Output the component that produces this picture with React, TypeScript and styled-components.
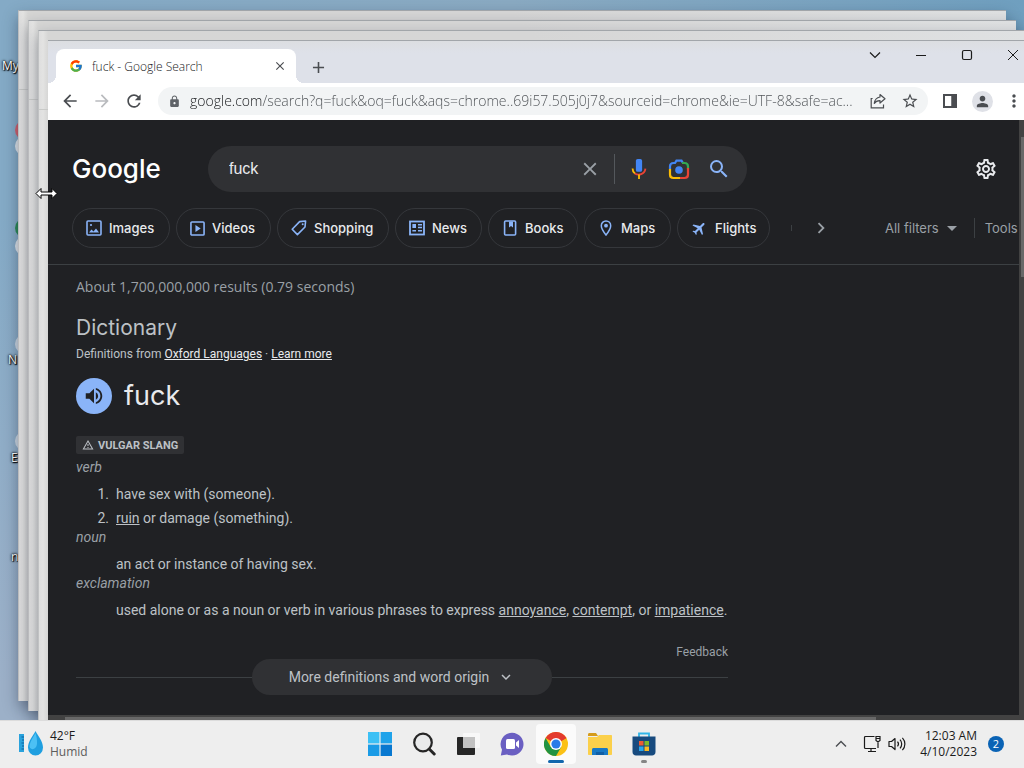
import React from 'react';
import styled, { createGlobalStyle, css } from 'styled-components';
import { FcGoogle } from 'react-icons/fc';
import {
  MdArrowBack,
  MdArrowForward,
  MdRefresh,
  MdLock,
  MdStarOutline,
  MdPerson,
  MdMoreVert,
  MdClose,
  MdAdd,
  MdVolumeUp,
  MdOutlineSettings,
  MdSearch,
  MdFlight,
  MdOutlineWarningAmber,
  MdChevronRight,
  MdKeyboardArrowDown,
  MdArrowDropDown,
} from 'react-icons/md';

const ui = '"Open Sans", "Noto Sans", sans-serif';
const product = 'Inter, "Liberation Sans", sans-serif';
const body = 'Roboto, "Liberation Sans", sans-serif';

const GlobalStyle = createGlobalStyle`
  *, *::before, *::after { box-sizing: border-box; }
  html, body, #root { height: 100%; margin: 0; }
  body { overflow: hidden; }
  button, input { font: inherit; color: inherit; border: 0; padding: 0; margin: 0; background: none; outline: none; }
  svg { display: block; flex: none; }
`;

const Screen = styled.div`
  display: flex;
  flex-direction: column;
  height: 100vh;
  font-family: ${ui};
`;

const Desktop = styled.main`
  position: relative;
  flex: 1;
  min-height: 0;
  overflow: hidden;
  background:
    linear-gradient(180deg, rgba(150, 172, 200, 0) 30%, #9cb0c8 95%),
    linear-gradient(90deg, #84aac6, #8aaac2 50%, #6f9fbf);
`;

/* Desktop shortcuts, mostly hidden behind the stacked windows */
const Shortcut = styled.div<{ $top: number; $left: number }>`
  position: absolute;
  top: ${(p) => p.$top}px;
  left: ${(p) => p.$left}px;
  font-size: 12px;
  line-height: 16px;
  color: #fff;
  text-shadow: 0 0 2px #000, 1px 1px 1px #000, 0 0 3px #000;
`;

const ShortcutArt = styled.div<{ $top: number; $color: string }>`
  position: absolute;
  top: ${(p) => p.$top}px;
  left: 15px;
  width: 20px;
  height: 20px;
  border-radius: 10px;
  background: ${(p) => p.$color};
`;

const windowPlace = css<{ $step: number }>`
  position: absolute;
  left: ${(p) => 18 + p.$step * 10}px;
  right: ${(p) => 18 - p.$step * 10}px;
  top: ${(p) => 10 + p.$step * 10}px;
  bottom: ${(p) => 19 - p.$step * 10}px;
`;

const GhostWindow = styled.div<{ $step: number }>`
  ${windowPlace}
  border-top: 1px solid #a2a6aa;
  border-left: 1px solid #c0c2c3;
  background:
    linear-gradient(#c9cac8, #c9cac8) 0 78px / 100% 1px no-repeat,
    linear-gradient(90deg, #dedede, #e3e3e2 4px, #d6d6d5 9px, #d6d6d6 50%, #dfe1e2);
  box-shadow: 0 6px 14px rgba(20, 30, 50, 0.35);
`;

const Window = styled.section<{ $step: number }>`
  ${windowPlace}
  display: flex;
  flex-direction: column;
  border-top: 1px solid #a2a6aa;
  background: #202124;
`;

const TabStrip = styled.div`
  display: flex;
  align-items: flex-end;
  flex: none;
  height: 42px;
  padding-left: 8px;
  background: linear-gradient(#dcdee1, #dee1e9 12px);
`;

const Tab = styled.div`
  position: relative;
  display: flex;
  align-items: center;
  width: 240px;
  height: 34px;
  padding: 0 8px 0 13px;
  gap: 9px;
  border-radius: 8px 8px 0 0;
  background: #fff;
  font-size: 12px;
  font-weight: 300;
  color: #202124;
  &::before, &::after {
    content: '';
    position: absolute;
    bottom: 0;
    width: 8px;
    height: 8px;
  }
  &::before { left: -8px; background: radial-gradient(circle at 0 0, transparent 8px, #fff 8px); }
  &::after { right: -8px; background: radial-gradient(circle at 100% 0, transparent 8px, #fff 8px); }
`;

const TabTitle = styled.span`
  flex: 1;
  white-space: nowrap;
`;

const IconButton = styled.button<{ $w?: number; $h?: number; $color?: string }>`
  display: flex;
  flex: none;
  align-items: center;
  justify-content: center;
  width: ${(p) => p.$w ?? 32}px;
  height: ${(p) => p.$h ?? 32}px;
  color: ${(p) => p.$color ?? '#4a4d51'};
`;

const NewTab = styled(IconButton)`
  margin-left: 6px;
`;

const Caption = styled.div`
  display: flex;
  align-self: flex-start;
  margin-left: auto;
`;

const Toolbar = styled.div`
  display: flex;
  align-items: center;
  flex: none;
  height: 37px;
  padding: 0 6px 1px;
  background: #fff;
`;

const AddressBar = styled.form`
  display: flex;
  flex: 1;
  align-items: center;
  min-width: 0;
  height: 28px;
  margin: 0 6px 0 8px;
  padding: 0 2px 0 10px;
  gap: 9px;
  border-radius: 14px;
  background: #f2f4f5;
  color: #5f6368;
`;

const AddressInput = styled.input`
  flex: 1;
  min-width: 0;
  font-size: 14px;
  font-weight: 300;
  line-height: 20px;
  background: linear-gradient(90deg, #16181b 73px, #4c5054 73px);
  -webkit-background-clip: text;
  background-clip: text;
  -webkit-text-fill-color: transparent;
`;

const AddressActions = styled.div`
  display: flex;
  flex: none;
  margin-left: -9px;
`;

const Avatar = styled.span`
  display: flex;
  align-items: center;
  justify-content: center;
  width: 21px;
  height: 21px;
  border-radius: 50%;
  background: #dfe1e7;
`;

const Viewport = styled.div`
  display: flex;
  flex: 1;
  min-height: 0;
`;

const Column = styled.div`
  display: flex;
  flex: 1;
  flex-direction: column;
  min-width: 0;
`;

const Page = styled.div`
  flex: 1;
  min-height: 0;
  overflow: hidden;
  background: #202124;
  color: #bdc1c6;
  font-family: ${body};
  font-size: 14px;
`;

const TrackY = styled.div`
  flex: none;
  width: 17px;
  padding-top: 17px;
  background: #424242;
`;

const ThumbY = styled.div`
  height: 140px;
  margin: 0 2px;
  background: #686868;
`;

const TrackX = styled.div`
  flex: none;
  height: 16px;
  padding: 2px 0 0 17px;
  background: #424242;
`;

const ThumbX = styled.div`
  width: 85%;
  height: 12px;
  background: #686868;
`;

const PageHeader = styled.header`
  padding: 26px 0 0 24px;
  border-bottom: 1px solid #3c4043;
`;

const SearchRow = styled.div`
  display: flex;
  align-items: center;
  padding-right: 21px;
`;

const Logo = styled.a`
  width: 136px;
  font-family: ${product};
  font-size: 26px;
  font-weight: 500;
  line-height: 46px;
  color: #fff;
  text-decoration: none;
`;

const SearchBox = styled.form`
  display: flex;
  align-items: center;
  width: 539px;
  height: 46px;
  margin-right: auto;
  padding: 0 8px 0 21px;
  border-radius: 23px;
  background: #303134;
`;

const SearchInput = styled.input`
  flex: 1;
  min-width: 0;
  font-family: "Liberation Sans", sans-serif;
  font-size: 16px;
  color: #e8eaed;
`;

const Rule = styled.span<{ $h: number; $m: string; $color?: string }>`
  flex: none;
  width: 1px;
  height: ${(p) => p.$h}px;
  margin: ${(p) => p.$m};
  background: ${(p) => p.$color ?? '#3c4043'};
`;

const FilterRow = styled.nav`
  display: flex;
  align-items: center;
  gap: 6px;
  padding: 16px 0;
  font-family: ${product};
  font-size: 13px;
  white-space: nowrap;
`;

const Chip = styled.a<{ $w: number }>`
  display: flex;
  flex: none;
  align-items: center;
  gap: 7px;
  width: ${(p) => p.$w}px;
  height: 40px;
  padding-left: 13px;
  border: 1px solid #35373b;
  border-radius: 20px;
  font-weight: 500;
  color: #e8eaed;
  text-decoration: none;
  svg { color: #8ab4f8; }
`;

const FilterTools = styled.div`
  display: flex;
  flex: none;
  align-items: center;
  margin-left: 35px;
  color: #9aa0a6;
`;

const TextButton = styled.button`
  display: flex;
  align-items: center;
  gap: 1px;
`;

const Results = styled.article`
  width: 680px;
  padding: 12px 0 0 28px;
`;

const Stats = styled.p`
  margin: 0;
  font-family: ${ui};
  font-size: 14px;
  line-height: 20px;
  color: #9aa0a6;
`;

const Heading = styled.h2`
  margin: 17px 0 0;
  font-family: ${product};
  font-size: 21px;
  font-weight: 400;
  line-height: 28px;
  color: #bdc1c6;
`;

const Source = styled.p`
  margin: 3px 0 0;
  font-size: 12px;
  line-height: 18px;
  a { color: #e8eaed; }
`;

const WordRow = styled.div`
  display: flex;
  align-items: center;
  gap: 12px;
  margin-top: 15px;
`;

const Speak = styled.button`
  display: flex;
  align-items: center;
  justify-content: center;
  width: 36px;
  height: 36px;
  border-radius: 50%;
  background: #8ab4f8;
  color: #202124;
`;

const Word = styled.h1`
  margin: 0;
  font-family: ${product};
  font-size: 27px;
  font-weight: 400;
  line-height: 36px;
  color: #e8eaed;
`;

const Label = styled.div`
  display: flex;
  align-items: center;
  gap: 4px;
  width: max-content;
  height: 18px;
  margin: 22px 0 6px;
  padding: 0 6px;
  border-radius: 2px;
  background: #303134;
  font-size: 11px;
  font-weight: 700;
`;

const Kind = styled.p`
  margin: 0;
  line-height: 14px;
  font-style: italic;
  color: #9aa0a6;
`;

const Senses = styled.ol<{ $plain?: boolean }>`
  margin: 0;
  padding: 8px 0 0 40px;
  line-height: 24px;
  white-space: nowrap;
  list-style: ${(p) => (p.$plain ? 'none' : 'decimal')};
  a { color: inherit; }
`;

const NumberedSenses = styled(Senses)`
  li::marker { content: counter(list-item) '.\\00a0\\00a0'; }
`;

const Feedback = styled.a`
  display: block;
  margin-top: 20px;
  font-size: 12px;
  line-height: 20px;
  text-align: right;
  color: #9aa0a6;
  text-decoration: none;
`;

const MoreRow = styled.div`
  display: flex;
  align-items: center;
  margin-top: -3px;
  &::before, &::after {
    content: '';
    flex: 1;
    height: 1px;
    background: #3c4043;
  }
`;

const More = styled.button`
  display: flex;
  align-items: center;
  justify-content: center;
  gap: 8px;
  width: 300px;
  height: 36px;
  border-radius: 18px;
  background: #303134;
`;

const Taskbar = styled.footer`
  display: flex;
  flex: none;
  align-items: center;
  height: 48px;
  padding: 0 18px;
  background: #eee;
  box-shadow: inset 0 1px #dcdcdc;
  font-size: 12px;
  line-height: 16px;
  color: #1b1b1b;
`;

const Side = styled.div<{ $end?: boolean }>`
  display: flex;
  flex: 1;
  align-items: center;
  justify-content: ${(p) => (p.$end ? 'flex-end' : 'flex-start')};
`;

const Weather = styled.button`
  display: flex;
  align-items: center;
  gap: 6px;
  text-align: left;
  small { display: block; font-size: 12px; color: #5c5c5c; }
`;

const Apps = styled.div`
  display: flex;
  gap: 4px;
`;

const AppButton = styled.button<{ $state?: 'open' | 'idle' }>`
  position: relative;
  display: flex;
  align-items: center;
  justify-content: center;
  width: 40px;
  height: 40px;
  border-radius: 4px;
  background: ${(p) => (p.$state === 'open' ? '#fbfbfb' : 'transparent')};
  &::after {
    content: '';
    position: absolute;
    bottom: 1px;
    width: ${(p) => (p.$state === 'open' ? 16 : p.$state ? 6 : 0)}px;
    height: 3px;
    border-radius: 2px;
    background: ${(p) => (p.$state === 'open' ? '#1267ad' : '#858585')};
  }
`;

const Clock = styled.button`
  margin-left: 11px;
  text-align: right;
`;

const Badge = styled.span`
  width: 16px;
  height: 16px;
  margin: 0 2px 0 11px;
  border-radius: 50%;
  background: #0a63b5;
  color: #fff;
  font-size: 11px;
  text-align: center;
`;

const Pointer = styled.svg`
  position: absolute;
  left: 35px;
  top: 187px;
`;

const Svg = ({ s = 18, h, box = '0 0 24 24', children }: { s?: number; h?: number; box?: string; children: React.ReactNode }) => (
  <svg width={s} height={h ?? s} viewBox={box} fill="none" stroke="currentColor" aria-hidden="true">
    {children}
  </svg>
);

const ImageIcon = () => (
  <Svg s={16} box="0 0 16 16">
    <rect x="1" y="1" width="14" height="14" rx="1" strokeWidth="1.6" />
    <path d="M3 12.5l2.5-3 2 2L10 8.6l3 3.9z" fill="currentColor" stroke="none" />
    <circle cx="5" cy="5" r="1.1" fill="currentColor" stroke="none" />
  </Svg>
);
const VideoIcon = () => (
  <Svg s={15} box="0 0 16 16">
    <rect x="1" y="1" width="14" height="14" rx="1" strokeWidth="1.7" />
    <path d="M5.8 4.2v7.6L11.4 8z" fill="currentColor" stroke="none" />
  </Svg>
);
const TagIcon = () => (
  <Svg s={16} box="0 0 16 16">
    <path d="M1.2 9.2L8.6 1.6 14.6 1l-.6 6-7.6 7.6z" strokeWidth="1.6" strokeLinejoin="round" />
    <circle cx="11.7" cy="4.2" r="1" fill="currentColor" stroke="none" />
  </Svg>
);
const NewsIcon = () => (
  <Svg s={16} box="0 0 16 16">
    <rect x="1" y="1.5" width="14" height="13" strokeWidth="1.8" />
    <rect x="3.4" y="4" width="3.6" height="4" fill="currentColor" stroke="none" />
    <path d="M9 4.7h4M9 7.6h4M3.4 10.8H7M9 10.8h4" strokeWidth="1.5" />
  </Svg>
);
const BookIcon = () => (
  <Svg s={16} box="0 0 16 16">
    <rect x="2.6" y="1" width="11" height="14" rx="1" strokeWidth="1.6" />
    <path d="M7 1.4h4v6L9 6 7 7.4z" fill="currentColor" stroke="none" />
  </Svg>
);
const PinIcon = () => (
  <Svg s={16} box="0 0 16 16">
    <path d="M8 1C5.2 1 3.3 3.1 3.3 5.7 3.3 9 8 15 8 15s4.7-6 4.7-9.3C12.7 3.1 10.8 1 8 1z" strokeWidth="1.5" />
    <circle cx="8" cy="5.7" r="1.9" fill="currentColor" stroke="none" />
  </Svg>
);
const PlaneIcon = () => <MdFlight size={17} transform="rotate(45)" />;

const ShareIcon = () => (
  <Svg s={16} box="0 0 16 16">
    <path d="M2.6 5.5H1.2v9.3h12.3v-3.3" strokeWidth="1.2" />
    <path d="M10 1.5l5 4.3-5 4.2V7.6C7.4 7.5 5.6 8.3 4.3 10.4 4.7 7 6.5 4.6 10 4z" strokeWidth="1.2" strokeLinejoin="round" />
  </Svg>
);
const MicIcon = () => (
  <Svg s={22}>
    <rect x="8.6" y="1" width="6.8" height="14" rx="2" fill="#4285f4" stroke="none" />
    <path d="M5 11.5c0 2.6 1 4.3 2.6 5.4" stroke="#fbbc04" strokeWidth="2" />
    <path d="M7.4 16.8c4 2.6 10.8 1.2 11.6-5.3" stroke="#ea4335" strokeWidth="2" />
    <path d="M12 18v5" stroke="#fbbc04" strokeWidth="2" />
  </Svg>
);
const LensIcon = () => (
  <Svg s={24}>
    <path d="M3 12V9.5C3 7.5 4.3 6 6.5 6H8l1.5-2.4h5L16 6" stroke="#4285f4" strokeWidth="2.2" />
    <path d="M15 6h2.5C19.5 6 21 7.5 21 9.5V12" stroke="#34a853" strokeWidth="2.2" />
    <path d="M3 12v5.5C3 19.5 4.5 21 6.5 21H13" stroke="#fbbc04" strokeWidth="2.2" />
    <path d="M13 21h4.5c2 0 3.5-1.5 3.5-3.5V11" stroke="#ea4335" strokeWidth="2.2" />
    <circle cx="12" cy="13" r="3.8" fill="#4285f4" stroke="none" />
  </Svg>
);

const HumidIcon = () => (
  <Svg s={26} h={26} box="0 0 26 26">
    <rect x="1" y="3" width="5" height="18" fill="#2aa2dc" stroke="none" />
    <path d="M3.5 6H6M4 9h2M3.5 12H6M4 15h2M3.5 18H6" stroke="#0b5f9c" />
    <path d="M17.5 0C15 5 10 10 10 16.5a7.5 8 0 0 0 15 0C25 10 20 5 17.5 0z" fill="#1f9fe0" stroke="none" />
    <path d="M17.5 2C15 7 11.5 11 11.5 16c2 4 7 2 7.500-3 .3-4-.5-8-1.500-11z" fill="#4cc0f4" stroke="none" />
  </Svg>
);
const StartIcon = () => (
  <Svg s={24}>
    <g stroke="none">
      <path d="M0 0h11.4v11.4H0z" fill="#3cc0f5" />
      <path d="M12.6 0H24v11.4H12.600z" fill="#1fa3ea" />
      <path d="M0 12.6h11.4V24H0z" fill="#1a9be6" />
      <path d="M12.6 12.6H24V24H12.600z" fill="#0878d0" />
    </g>
  </Svg>
);
const FindIcon = () => (
  <Svg s={24}>
    <circle cx="11" cy="10.5" r="8.8" stroke="#262626" strokeWidth="2.2" fill="#e9eaeb" />
    <path d="M17.2 17l5 5" stroke="#262626" strokeWidth="3" strokeLinecap="round" />
  </Svg>
);
const TaskViewIcon = () => (
  <Svg s={24}>
    <g stroke="none">
      <rect x="7" y="1" width="17" height="15" rx="1" fill="#f8f8f8" />
      <rect x="1" y="5" width="18" height="18" rx="1" fill="#262626" />
      <path d="M7 5h12v11H7z" fill="#c2c2c2" />
    </g>
  </Svg>
);
const ChatIcon = () => (
  <Svg s={24}>
    <g stroke="none">
      <path d="M12 .8a11.4 11.4 0 1 1-5 21.6L.8 23.5 2 17.8A11.4 11.4 0 0 1 12 .8z" fill="#6a5fc2" />
      <rect x="6" y="7" width="9" height="10" rx="1.5" fill="#fff" />
      <path d="M16 10.5L19 8v8l-3-2.5z" fill="#fff" />
    </g>
  </Svg>
);
const ChromeIcon = () => (
  <Svg s={24}>
    <g stroke="none">
      <circle cx="12" cy="12" r="12" fill="#fbc116" />
      <path d="M12 12L1.6 6A12 12 0 0 1 22.4 6z" fill="#e33b2e" />
      <path d="M22.4 6H12v6z" fill="#e33b2e" />
      <path d="M1.6 6A12 12 0 0 0 12 24l5.2-9L12 12 6.8 15z" fill="#229342" />
      <circle cx="12" cy="12" r="6" fill="#fff" />
      <circle cx="12" cy="12" r="4.6" fill="#2a7be8" />
    </g>
  </Svg>
);
const FolderIcon = () => (
  <Svg s={24}>
    <g stroke="none">
      <path d="M0 2.5C0 1.7.6 1 1.4 1H8l2 3H0z" fill="#d59b1a" />
      <path d="M0 5h9l2-2h12c.6 0 1 .4 1 1v18c0 .6-.4 1-1 1H1c-.6 0-1-.4-1-1z" fill="#fbd04b" />
      <path d="M4 23v-5.5C4 16.7 4.7 16 5.5 16h13c.8 0 1.5.7 1.5 1.5V23z" fill="#1878c4" />
      <path d="M8 20h8v3H8z" fill="#0f5ea5" />
    </g>
  </Svg>
);
const StoreIcon = () => (
  <Svg s={24}>
    <path d="M7 5V1.5h10V5" stroke="#31b5e8" strokeWidth="1.8" />
    <g stroke="none">
      <path d="M.5 4.5h23V20c0 2-1.5 3.5-3.5 3.5H4C2 23.5.5 22 .5 20z" fill="#174a7e" />
      <path d="M7 9h4.5v4.5H7z" fill="#ef5a32" />
      <path d="M12.5 9H17v4.5h-4.500z" fill="#7fba28" />
      <path d="M7 14.5h4.5V19H7z" fill="#2aa6ea" />
      <path d="M12.5 14.5H17V19h-4.500z" fill="#fcbb22" />
    </g>
  </Svg>
);
const NetworkIcon = () => (
  <Svg s={18} box="0 0 18 18">
    <path d="M11.5 1.5h-9a1 1 0 0 0-1 1v10a1 1 0 0 0 1 1H13M5 16.5h8M8 13.5v3" strokeWidth="1.2" />
    <path d="M13 1.5h4v4l-2 1.5-2-1.5zM13 3.5h4M15 7v6" strokeWidth="1.2" />
  </Svg>
);
const SoundIcon = () => (
  <Svg s={18} box="0 0 18 18">
    <path d="M1 6.5v5h2.5L7 14.5v-11L3.5 6.5z" strokeWidth="1.2" strokeLinejoin="round" />
    <path d="M9.5 6.7a3.5 3.5 0 0 1 0 4.6M12 4.7a6.3 6.3 0 0 1 0 8.6M14.4 2.8a9 9 0 0 1 0 12.4" strokeWidth="1.2" />
  </Svg>
);

const chips = [
  { label: 'Images', w: 98, Icon: ImageIcon },
  { label: 'Videos', w: 95, Icon: VideoIcon },
  { label: 'Shopping', w: 112, Icon: TagIcon },
  { label: 'News', w: 87, Icon: NewsIcon },
  { label: 'Books', w: 90, Icon: BookIcon },
  { label: 'Maps', w: 87, Icon: PinIcon },
  { label: 'Flights', w: 93, Icon: PlaneIcon },
];

const apps: { label: string; Icon: React.FC; state?: 'open' | 'idle' }[] = [
  { label: 'Start', Icon: StartIcon },
  { label: 'Find', Icon: FindIcon },
  { label: 'Task view', Icon: TaskViewIcon },
  { label: 'Chat', Icon: ChatIcon },
  { label: 'Chrome', Icon: ChromeIcon, state: 'open' },
  { label: 'Files', Icon: FolderIcon },
  { label: 'Store', Icon: StoreIcon, state: 'idle' },
];

const BrowserChrome = () => (
  <>
    <TabStrip>
      <Tab>
        <FcGoogle size={14} />
        <TabTitle>fuck - Google Search</TabTitle>
        <IconButton $w={16} $h={16} aria-label="Close tab"><MdClose size={14} /></IconButton>
      </Tab>
      <NewTab aria-label="New tab"><MdAdd size={19} /></NewTab>
      <Caption>
        <IconButton $w={46} $h={28} $color="#1b1b1b" aria-label="Tab list">
          <Svg s={12} box="0 0 12 12"><path d="M1 3.5l5 5 5-5" strokeWidth="1.2" /></Svg>
        </IconButton>
        <IconButton $w={46} $h={28} $color="#1b1b1b" aria-label="Minimize">
          <Svg s={12} box="0 0 12 12"><path d="M1 6.5h10" /></Svg>
        </IconButton>
        <IconButton $w={46} $h={28} $color="#1b1b1b" aria-label="Maximize">
          <Svg s={12} box="0 0 12 12"><rect x="1.5" y="1.5" width="9" height="9" rx="1.5" strokeWidth="1.2" /></Svg>
        </IconButton>
        <IconButton $w={46} $h={28} $color="#1b1b1b" aria-label="Close">
          <Svg s={12} box="0 0 12 12"><path d="M1 1l10 10M11 1L1 11" /></Svg>
        </IconButton>
      </Caption>
    </TabStrip>
    <Toolbar>
      <IconButton aria-label="Back"><MdArrowBack size={20} /></IconButton>
      <IconButton $color="#b9bbbe" aria-label="Forward"><MdArrowForward size={20} /></IconButton>
      <IconButton aria-label="Reload"><MdRefresh size={20} /></IconButton>
      <AddressBar>
        <MdLock size={13} />
        <AddressInput
          aria-label="Address"
          readOnly
          value="google.com/search?q=fuck&oq=fuck&aqs=chrome..69i57.505j0j7&sourceid=chrome&ie=UTF-8&safe=ac..."
        />
        <AddressActions>
          <IconButton type="button" aria-label="Share"><ShareIcon /></IconButton>
          <IconButton type="button" aria-label="Bookmark"><MdStarOutline size={18} /></IconButton>
        </AddressActions>
      </AddressBar>
      <IconButton aria-label="Side panel">
        <Svg s={14} box="0 0 14 14"><path d="M1 1h12v12H1zM9.5 1v12" strokeWidth="2" /><path d="M9 1h4v12H9z" fill="currentColor" /></Svg>
      </IconButton>
      <IconButton aria-label="Profile"><Avatar><MdPerson size={17} /></Avatar></IconButton>
      <IconButton aria-label="Menu"><MdMoreVert size={20} /></IconButton>
    </Toolbar>
  </>
);

const SearchHeader = () => (
  <PageHeader>
    <SearchRow>
      <Logo href="#">Google</Logo>
      <SearchBox>
        <SearchInput aria-label="Search" readOnly value="fuck" />
        <IconButton type="button" $color="#9aa0a6" aria-label="Clear"><MdClose size={22} /></IconButton>
        <Rule $h={30} $m="0 4px 0 8px" $color="#54585c" />
        <IconButton type="button" $w={40} aria-label="Voice"><MicIcon /></IconButton>
        <IconButton type="button" $w={40} aria-label="Lens"><LensIcon /></IconButton>
        <IconButton $w={40} $color="#8ab4f8" aria-label="Search"><MdSearch size={24} /></IconButton>
      </SearchBox>
      <IconButton $w={24} $color="#e8eaed" aria-label="Settings"><MdOutlineSettings size={24} /></IconButton>
    </SearchRow>
    <FilterRow>
      {chips.map(({ label, w, Icon }) => (
        <Chip key={label} href="#" $w={w}><Icon />{label}</Chip>
      ))}
      <Rule $h={6} $m="0 0 0 15px" />
      <IconButton $w={46} $color="#9aa0a6" aria-label="More"><MdChevronRight size={22} /></IconButton>
      <FilterTools>
        <TextButton>All filters <MdArrowDropDown size={24} /></TextButton>
        <Rule $h={20} $m="0 10px" />
        <TextButton>Tools</TextButton>
      </FilterTools>
    </FilterRow>
  </PageHeader>
);

const Dictionary = () => (
  <Results>
    <Stats>About 1,700,000,000 results (0.79 seconds)</Stats>
    <Heading>Dictionary</Heading>
    <Source>Definitions from <a href="#">Oxford Languages</a> · <a href="#">Learn more</a></Source>
    <WordRow>
      <Speak aria-label="Listen"><MdVolumeUp size={22} /></Speak>
      <Word>fuck</Word>
    </WordRow>
    <Label><MdOutlineWarningAmber size={12} />VULGAR SLANG</Label>
    <Kind>verb</Kind>
    <NumberedSenses>
      <li>have sex with (someone).</li>
      <li><a href="#">ruin</a> or damage (something).</li>
    </NumberedSenses>
    <Kind>noun</Kind>
    <Senses $plain><li>an act or instance of having sex.</li></Senses>
    <Kind>exclamation</Kind>
    <Senses $plain>
      <li>
        used alone or as a noun or verb in various phrases to express <a href="#">annoyance</a>,{' '}
        <a href="#">contempt</a>, or <a href="#">impatience</a>.
      </li>
    </Senses>
    <Feedback href="#">Feedback</Feedback>
    <MoreRow>
      <More>More definitions and word origin <MdKeyboardArrowDown size={18} /></More>
    </MoreRow>
  </Results>
);

export default function App() {
  return (
    <Screen>
      <GlobalStyle />
      <Desktop>
        <Shortcut $top={58} $left={2}>My</Shortcut>
        <ShortcutArt $top={120} $color="#d2606c" />
        <ShortcutArt $top={136} $color="#dfe5ea" />
        <ShortcutArt $top={218} $color="#2c8a55" />
        <ShortcutArt $top={236} $color="#dfe5ea" />
        <ShortcutArt $top={334} $color="#cdd8e2" />
        <Shortcut $top={352} $left={8}>N</Shortcut>
        <ShortcutArt $top={431} $color="#cdd8e2" />
        <Shortcut $top={450} $left={11}>E</Shortcut>
        <Shortcut $top={549} $left={11}>n</Shortcut>
        <GhostWindow $step={0} />
        <GhostWindow $step={1} />
        <GhostWindow $step={2} />
        <Window $step={3}>
          <BrowserChrome />
          <Viewport>
            <Column>
              <Page>
                <SearchHeader />
                <Dictionary />
              </Page>
              <TrackX><ThumbX /></TrackX>
            </Column>
            <TrackY><ThumbY /></TrackY>
          </Viewport>
        </Window>
        <Pointer width="23" height="13" viewBox="0 0 23 13">
          <path d="M1 6.5L6 1.5v3.5h11V1.500L22 6.500l-5 5V8H6v3.500z" fill="#fff" stroke="#000" />
        </Pointer>
      </Desktop>
      <Taskbar>
        <Side>
          <Weather>
            <HumidIcon />
            <span>42°F<small>Humid</small></span>
          </Weather>
        </Side>
        <Apps>
          {apps.map(({ label, Icon, state }) => (
            <AppButton key={label} $state={state} aria-label={label}><Icon /></AppButton>
          ))}
        </Apps>
        <Side $end>
          <IconButton $w={36} aria-label="Hidden icons">
            <Svg s={12} box="0 0 12 12"><path d="M1 8.5l5-5 5 5" strokeWidth="1.4" /></Svg>
          </IconButton>
          <IconButton $w={26} $color="#1b1b1b" aria-label="Network"><NetworkIcon /></IconButton>
          <IconButton $w={24} $color="#1b1b1b" aria-label="Volume"><SoundIcon /></IconButton>
          <Clock>12:03 AM<br />4/10/2023</Clock>
          <Badge>2</Badge>
        </Side>
      </Taskbar>
    </Screen>
  );
}
